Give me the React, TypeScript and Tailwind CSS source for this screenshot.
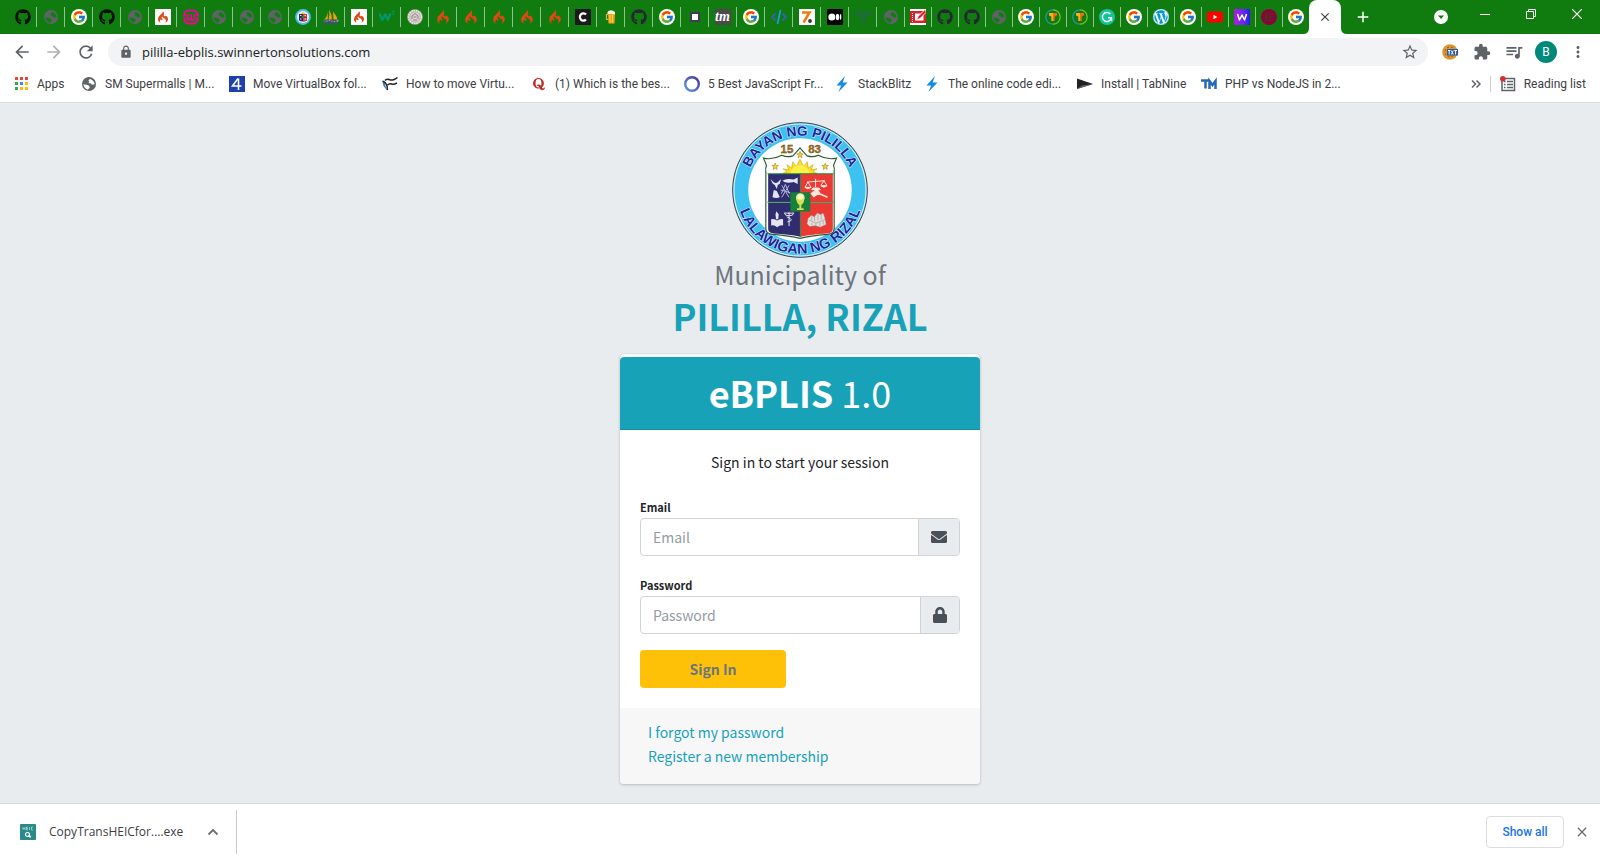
import React from "react";
import { FaGithub, FaWordpress, FaQuora, FaEnvelope, FaLock } from "react-icons/fa";
import { FcGoogle } from "react-icons/fc";
import { SiCodeigniter } from "react-icons/si";
import {
  MdArrowBack,
  MdArrowForward,
  MdRefresh,
  MdLock,
  MdStarBorder,
  MdExtension,
  MdMoreVert,
  MdClose,
  MdAdd,
  MdQueueMusic,
} from "react-icons/md";

const UI = "font-['Roboto','Noto_Sans',sans-serif]";
const PAGE = "font-['Noto_Sans_CJK_JP','Noto_Sans_CJK_SC',sans-serif]";

function Globe({ land = "#fff" }: { land?: string }) {
  return (
    <svg viewBox="0 0 24 24" className="size-4" aria-hidden="true">
      <circle cx="12" cy="12" r="10.5" fill="#5f6368" />
      <path d="M3.500 12.500l5 .5 4 1.500.5 3-3 3C6.500 19.500 4 16.500 3.500 12.500zM13.500 4.500l-2.500 2 1.500 2-1.500 2 4 .8 1.500 2 4-.8C20 8.500 17.500 5.500 13.500 4.500z" fill={land} />
    </svg>
  );
}

function TabGlobe() {
  return <Globe land="#107c10" />;
}

function Google() {
  return (
    <span className="flex size-4 items-center justify-center rounded-full bg-white">
      <FcGoogle className="size-3.5" />
    </span>
  );
}

function FlameTile() {
  return (
    <span className="flex size-4 items-center justify-center bg-white">
      <SiCodeigniter className="size-3 text-[#dd4814]" />
    </span>
  );
}

function Flame() {
  return <SiCodeigniter className="size-3.5 text-[#dd4814]" />;
}

function Wamp() {
  return (
    <svg viewBox="0 0 16 16" className="size-4" aria-hidden="true">
      <rect x="1.500" y="1.500" width="13" height="13" rx="4.500" fill="none" stroke="#f70094" strokeWidth="2.200" />
      <path d="M4.500 5v4.500q0 1.500 1.700 1.500T8 9.500V5v4.500Q8 11 9.700 11t1.800-1.500V5" fill="none" strokeWidth="1.800" stroke="#f70094" />
      <path d="M0 8h3M13 8h3" stroke="#107c10" strokeWidth="1" />
    </svg>
  );
}

function MiniSeal() {
  return (
    <svg viewBox="0 0 16 16" className="size-4" aria-hidden="true">
      <circle cx="8" cy="8" r="7.900" fill="#4fbfe8" />
      <circle cx="8" cy="8" r="6" fill="#e8eef4" />
      <path d="M4 5h8v6q0 1-4 1.500Q4 12 4 11z" fill="#2b2c6c" />
      <path d="M8 8h4V5H8z" fill="#e53b32" />
      <path d="M8 8.500v4q4-.5 4-1.500V8.500z" fill="#e53b32" />
      <path d="M5 5h6L8 3z" fill="#f7c81e" />
      <rect x="7" y="7" width="2" height="2" fill="#2c8a3a" />
      <path d="M5 6.500h1.500M9.500 6.500H11M5 10h1.500M9.500 10H11" stroke="#d9d9e6" />
    </svg>
  );
}

function Sails() {
  return (
    <svg viewBox="0 0 16 16" className="size-4" aria-hidden="true">
      <path d="M4.500 1.500Q5 7 1 10.500h4z" fill="#c9a227" />
      <path d="M6 .5q3 5 3 10H5.500Q7 6 6 .5zM10 2.500q3.500 4 4.500 8H10.500z" fill="#f89c0e" />
      <path d="M0 11h16l-1.500 2H1z" fill="#9b9bb0" />
      <path d="M1 15.500v-4h2v2H1M5 15.500v-4l1.500 2 1.500-2v4M10 15.500v-4h3v4M10 13.500h5" fill="none" stroke="#4b4b78" strokeWidth="1.200" />
    </svg>
  );
}

function W3() {
  return (
    <svg viewBox="0 0 16 16" className="size-4" aria-hidden="true">
      <path d="M.5 4.500l2.700 6.300 3-5.300 2.600 5.300L11.500 4.500" fill="none" stroke="#04966a" strokeWidth="2.400" strokeLinejoin="round" />
      <path d="M13 2h2l-1 1.300q1.500.3 1 1.500t-2 .6" fill="none" stroke="#04966a" strokeWidth="0.900" />
    </svg>
  );
}

function GreySeal() {
  return (
    <svg viewBox="0 0 16 16" className="size-4" aria-hidden="true">
      <circle cx="8" cy="8" r="7.800" fill="#b9b0ab" />
      <circle cx="8" cy="8" r="6.300" fill="none" stroke="#efe9e6" strokeWidth="1.500" strokeDasharray="1.500 .8" />
      <circle cx="8" cy="8" r="4.800" fill="#d9d2ce" />
      <path d="M5 10V7l3-2.500L11 7v3M6.500 8h3M6 11h4" fill="none" stroke="#8d8480" />
    </svg>
  );
}

function LetterC() {
  return (
    <svg viewBox="0 0 16 16" className="size-4" aria-hidden="true">
      <rect width="16" height="16" fill="#1b1b1f" />
      <path d="M11 5.500A3.500 3.700 0 1 0 11 10.500" fill="none" stroke="#fff" strokeWidth="2.200" />
    </svg>
  );
}

function Beer() {
  return (
    <svg viewBox="0 0 16 16" className="size-4" aria-hidden="true">
      <path d="M5 5.500H3.500v5H5.500" fill="none" stroke="#d8b25a" strokeWidth="1.200" />
      <path d="M5 3.500h7L11.500 14.500h-6z" fill="#f2a516" />
      <path d="M7 6v7.500M9.500 6v7.500" stroke="#ffc94d" />
      <path d="M4.500 5V3L6 1.800l2-.5 2 .5L12 3v2.500L10 5z" fill="#f6efdc" />
    </svg>
  );
}

function Square() {
  return (
    <svg viewBox="0 0 16 16" className="size-4" aria-hidden="true">
      <rect x="3" y="3" width="10" height="10" fill="#3f3d56" />
      <rect x="5" y="5" width="6" height="6" fill="#fff" />
    </svg>
  );
}

function Tm() {
  return <span className="flex size-4 items-center justify-center bg-[#4a4a4a] font-['Liberation_Serif',serif] text-sm leading-none font-bold text-white italic">tm</span>;
}

function Code() {
  return (
    <svg viewBox="0 0 16 16" className="size-4" aria-hidden="true">
      <path d="M4.500 4.500L1 8l3.500 3.500M11.500 4.500L15 8l-3.500 3.500" fill="none" stroke="#3d5faf" strokeWidth="1.800" />
      <path d="M9.500 1L6.500 15" stroke="#18a0e8" strokeWidth="1.700" />
    </svg>
  );
}

function Zed() {
  return (
    <svg viewBox="0 0 16 16" className="size-4" aria-hidden="true">
      <rect width="16" height="16" fill="#fff" />
      <path d="M3 3.500h7.500L4.500 13.500" fill="none" stroke="#f07c12" strokeWidth="2.600" />
      <circle cx="11" cy="12" r="1.900" fill="#333" />
    </svg>
  );
}

function Medium() {
  return (
    <svg viewBox="0 0 16 16" className="size-4" aria-hidden="true">
      <rect width="16" height="16" rx="1" fill="#000" />
      <circle cx="4.800" cy="8" r="3.500" fill="#fff" />
      <ellipse cx="10.500" cy="8" rx="1.700" ry="3.300" fill="#fff" />
      <ellipse cx="13.600" cy="8" rx="0.800" ry="3" fill="#fff" />
    </svg>
  );
}

function Figure() {
  return (
    <svg viewBox="0 0 16 16" className="size-4" aria-hidden="true">
      <path d="M1 2.500v4M3 2.500v4M13 2.500v4M15 2.500v4M1 4.500h14M5.500 5l1.500 4-1.500 5.500M10.500 5L9 9l1.500 5.500M7 2.500h2M6 10.500h4" fill="none" stroke="#2a5f5a" strokeWidth="1.200" />
    </svg>
  );
}

function RedPen() {
  return (
    <svg viewBox="0 0 16 16" className="size-4" aria-hidden="true">
      <rect width="16" height="16" fill="#fff" />
      <path d="M0 2h16v12H0z" fill="#d8232f" />
      <path d="M5 4.500h8.500v7H5z" fill="#fff" />
      <path d="M15.500 0L8 7.500 6.500 11 10 9.500 16 3.500z" fill="#d8232f" stroke="#fff" strokeWidth="0.800" />
      <path d="M2.500 4v9" stroke="#fff" strokeDasharray="1 1" />
    </svg>
  );
}

function TeeRing() {
  return (
    <svg viewBox="0 0 16 16" className="size-4" aria-hidden="true">
      <path d="M8 .8A7.200 7.200 0 0 0 8 15.200" fill="none" stroke="#1d9bb5" strokeWidth="1.200" />
      <path d="M8 .8A7.200 7.200 0 0 1 8 15.200" fill="none" stroke="#7ec820" strokeWidth="1.200" />
      <path d="M4 4h4v8H6.300V7.500L4 6.500z" fill="#f7b11b" />
      <path d="M12 4H8v8h1.700V7.500l2.300-1z" fill="#ee6d1a" />
    </svg>
  );
}

function Grammarly() {
  return (
    <svg viewBox="0 0 16 16" className="size-4" aria-hidden="true">
      <circle cx="8" cy="8" r="8" fill="#15c39a" />
      <path d="M11.300 5A4.500 4.500 0 1 0 12.300 9M12.500 12V8.800H9" fill="none" stroke="#fff" strokeWidth="1.400" />
    </svg>
  );
}

function WordPress() {
  return (
    <span className="flex size-4 items-center justify-center rounded-full bg-white">
      <FaWordpress className="size-4 text-[#0097d6]" />
    </span>
  );
}

function YouTube() {
  return (
    <svg viewBox="0 0 16 16" className="size-4" aria-hidden="true">
      <rect y="2.500" width="16" height="11" rx="2.500" fill="#f00" />
      <path d="M6.500 5.800v4.400L10.300 8z" fill="#fff" />
    </svg>
  );
}

function GradientW() {
  return (
    <span className="flex size-4 items-center justify-center bg-linear-to-r from-[#b014e0] to-[#2418f0]">
      <svg viewBox="0 0 16 16" className="size-4" aria-hidden="true">
        <path d="M3.500 5l2 6L8 6l2.500 5 2-6" fill="none" stroke="#fff" strokeWidth="1.500" strokeLinejoin="round" />
      </svg>
    </span>
  );
}

function Elementor() {
  return (
    <svg viewBox="0 0 16 16" className="size-4" aria-hidden="true">
      <circle cx="8" cy="8" r="8" fill="#92003b" />
      <path d="M4 4h2v8H4zM7 4h5v1.500H7zM7 7.200h5v1.500H7zM7 10.500h5V12H7z" fill="#3f3a1c" />
    </svg>
  );
}

function GithubBlack() {
  return <FaGithub className="size-4 text-[#0a0f0a]" />;
}

function GithubDark() {
  return <FaGithub className="size-4 text-[#24292f]" />;
}

type Tab = [string, () => React.ReactElement];

const wideTabs: Tab[] = [
  ["GitHub", GithubBlack], ["Site", TabGlobe], ["Google", Google], ["GitHub", GithubBlack], ["Site", TabGlobe],
  ["CodeIgniter", FlameTile], ["WampServer", Wamp], ["Site", TabGlobe], ["Site", TabGlobe], ["Site", TabGlobe],
  ["Pililla", MiniSeal], ["phpMyAdmin", Sails], ["CodeIgniter", FlameTile], ["W3Schools", W3], ["Municipality", GreySeal],
  ["CodeIgniter", Flame], ["CodeIgniter", Flame], ["CodeIgniter", Flame], ["CodeIgniter", Flame], ["CodeIgniter", Flame],
  ["C", LetterC], ["Beer", Beer], ["GitHub", GithubDark], ["Google", Google], ["Square", Square], ["TM", Tm],
  ["Google", Google], ["Code", Code], ["Z", Zed], ["Medium", Medium], ["Figure", Figure], ["Site", TabGlobe],
];

const slimTabs: Tab[] = [
  ["Editor", RedPen], ["GitHub", GithubDark], ["GitHub", GithubDark], ["Site", TabGlobe], ["Google", Google],
  ["Tuts", TeeRing], ["Tuts", TeeRing], ["Grammarly", Grammarly], ["Google", Google], ["WordPress", WordPress],
  ["Google", Google], ["YouTube", YouTube], ["W", GradientW], ["Elementor", Elementor],
];

function TabButton({ name, icon: Icon, size }: { name: string; icon: () => React.ReactElement; size: string }) {
  return (
    <button aria-label={name} className={"flex h-5 shrink-0 items-center justify-center border-r border-[#8fc38f] " + size}>
      <Icon />
    </button>
  );
}

function TabStrip() {
  return (
    <div className="flex h-[34px] bg-[#107c10] pl-[9px]">
      <div className="flex items-center">
        {wideTabs.map(([name, icon], i) => (
          <TabButton key={i} name={name} icon={icon} size="w-7" />
        ))}
        {slimTabs.map(([name, icon], i) => (
          <TabButton key={i} name={name} icon={icon} size="w-[27px]" />
        ))}
        <button aria-label="Google" className="flex h-5 w-[26px] items-center justify-center">
          <Google />
        </button>
      </div>
      <div className="relative flex w-8 items-center justify-center self-stretch rounded-t-lg bg-white">
        <svg viewBox="0 0 6 6" className="absolute right-full bottom-0 size-1.5" aria-hidden="true"><path d="M6 0v6H0Q6 6 6 0z" fill="#fff" /></svg>
        <svg viewBox="0 0 6 6" className="absolute bottom-0 left-full size-1.5" aria-hidden="true"><path d="M0 0v6h6Q0 6 0 0z" fill="#fff" /></svg>
        <button aria-label="Close tab" className="text-[#3c4043]">
          <MdClose className="size-3.5" />
        </button>
      </div>
      <button aria-label="New tab" className="flex w-11 items-center justify-center text-white">
        <MdAdd className="size-[18px]" />
      </button>
      <div className="ml-auto flex">
        <button aria-label="Search tabs" className="flex w-[42px] items-center justify-center">
          <svg viewBox="0 0 14 14" className="size-3.5" aria-hidden="true">
            <circle cx="7" cy="7" r="7" fill="#fff" />
            <path d="M4 5.500h6L7 9z" fill="#107c10" />
          </svg>
        </button>
        <button aria-label="Minimize" className="flex h-7 w-[46px] items-center justify-center">
          <svg viewBox="0 0 10 10" className="size-2.5" aria-hidden="true"><path d="M0 5.500h10" stroke="#fff" /></svg>
        </button>
        <button aria-label="Restore" className="flex h-7 w-[46px] items-center justify-center">
          <svg viewBox="0 0 10 10" className="size-2.5" aria-hidden="true"><path d="M.5 2.500h7v7h-7zM2.500 2.500v-2h7v7h-2" fill="none" stroke="#fff" /></svg>
        </button>
        <button aria-label="Close window" className="flex h-7 w-[46px] items-center justify-center">
          <svg viewBox="0 0 10 10" className="size-2.5" aria-hidden="true"><path d="M0 0l10 10M10 0L0 10" stroke="#fff" strokeWidth="1.200" /></svg>
        </button>
      </div>
    </div>
  );
}

const toolButton = "flex w-8 shrink-0 items-center justify-center text-[#5f6368]";

function TxtBadge() {
  return (
    <svg viewBox="0 0 16 16" className="size-4" aria-hidden="true">
      <circle cx="8" cy="8" r="7.800" fill="#e0962e" />
      <circle cx="8" cy="8" r="5" fill="none" stroke="#8a5a17" strokeDasharray="2 2" />
      <rect x="5" y="5" width="11" height="6.500" fill="#2458a8" />
      <path d="M6 6.500h2.400M7.200 6.500v4M9.300 6.500l2 4M11.300 6.500l-2 4M12.300 6.500h2.700M13.600 6.500v4" stroke="#fff" strokeWidth="1" />
    </svg>
  );
}

function Toolbar() {
  return (
    <div className="flex h-9 items-center px-[6px]">
      <button aria-label="Back" className={toolButton}><MdArrowBack className="size-5" /></button>
      <button aria-label="Forward" className={toolButton + " opacity-50"}><MdArrowForward className="size-5" /></button>
      <button aria-label="Reload" className={toolButton}><MdRefresh className="size-5" /></button>
      <div className="ml-[6px] flex h-7 flex-1 items-center rounded-full bg-[#f1f3f4] pr-[9px]">
        <MdLock className="mr-[9px] ml-[11px] size-3.5 text-[#5f6368]" />
        <input
          aria-label="Address"
          defaultValue="pililla-ebplis.swinnertonsolutions.com"
          className="min-w-0 flex-1 bg-transparent font-['Open_Sans','Noto_Sans',sans-serif] text-[13px] leading-5 text-[#202124] outline-none"
        />
        <button aria-label="Bookmark this page" className="text-[#5f6368]"><MdStarBorder className="size-[18px]" /></button>
      </div>
      <div className="ml-[6px] flex">
        <button aria-label="Text extension" className={toolButton}><TxtBadge /></button>
        <button aria-label="Extensions" className={toolButton}><MdExtension className="size-[18px]" /></button>
        <button aria-label="Media controls" className={toolButton}><MdQueueMusic className="size-5" /></button>
        <button aria-label="Profile" className={toolButton}>
          <span className="flex size-[22px] items-center justify-center rounded-full bg-[#00897b] text-xs text-white">B</span>
        </button>
        <button aria-label="Menu" className={toolButton}><MdMoreVert className="size-[18px]" /></button>
      </div>
    </div>
  );
}

function AppsGrid() {
  return (
    <svg viewBox="0 0 14 14" className="size-3.5" aria-hidden="true">
      <path d="M0 0h3v3H0zM5 0h3v3H5zM10 0h3v3h-3z" fill="#ea4335" />
      <path d="M0 5h3v3H0z" fill="#34a853" />
      <path d="M5 5h3v3H5z" fill="#4285f4" />
      <path d="M10 5h3v3h-3zM5 10h3v3H5zM10 10h3v3h-3z" fill="#fbbc04" />
      <path d="M0 10h3v3H0z" fill="#34a853" />
    </svg>
  );
}

function Four() {
  return (
    <svg viewBox="0 0 16 16" className="size-4" aria-hidden="true">
      <rect width="16" height="16" fill="#1e3fae" />
      <path d="M9 2.500L3.500 10h9M9.500 2.500v11.500" fill="none" stroke="#fff" strokeWidth="1.600" />
    </svg>
  );
}

function Waves() {
  return (
    <svg viewBox="0 0 16 16" className="size-4" aria-hidden="true">
      <path d="M0 4.500l3 1.500L3 9l2.500 6L1.500 10z" fill="#3182b8" />
      <path d="M3 4.500q1.500-2 4-1t4.500.3T15.500 1.500M5.500 9q2-2 4-1t5.500-1M1 5l2.500 2 1.500 3 .5 4" fill="none" stroke="#222" strokeWidth="1.500" />
    </svg>
  );
}

function Quora() {
  return (
    <span className="flex size-4 items-center justify-center">
      <FaQuora className="size-3.5 text-[#b92b27]" />
    </span>
  );
}

function Ring() {
  return (
    <svg viewBox="0 0 16 16" className="size-4" aria-hidden="true">
      <defs><linearGradient id="ring" x1="1" y1="0" x2="0" y2="1"><stop stopColor="#4b2fa0" /><stop offset="1" stopColor="#5c9be0" /></linearGradient></defs>
      <circle cx="8" cy="8" r="6.800" fill="none" stroke="url(#ring)" strokeWidth="2.400" />
    </svg>
  );
}

function Bolt() {
  return <svg viewBox="0 0 16 16" className="size-4" aria-hidden="true"><path d="M11 0L2.500 9.500h4.700L4.500 16 13.500 6.500H8.600z" fill="#1389e8" /></svg>;
}

function Play() {
  return (
    <svg viewBox="0 0 16 16" className="size-4" aria-hidden="true">
      <path d="M0 2.500L16 8 0 13z" fill="#222" />
      <path d="M0 13l5-3.500L16 8z" fill="#666" />
    </svg>
  );
}

function TmBlue() {
  return <svg viewBox="0 0 16 16" className="size-4" aria-hidden="true"><path d="M0 4.500h7.500M4.500 4.500v8M8.500 13V5l3 4 3-4v8" fill="none" stroke="#2468b8" strokeWidth="2.500" /></svg>;
}

const bookmarks: [string, () => React.ReactElement, string][] = [
  ["Apps", AppsGrid, "w-[66px]"],
  ["SM Supermalls | M...", Globe, "w-[148px]"],
  ["Move VirtualBox fol...", Four, "w-[153px]"],
  ["How to move Virtu...", Waves, "w-[149px]"],
  ["(1) Which is the bes...", Quora, "w-[153px]"],
  ["5 Best JavaScript Fr...", Ring, "w-[150px]"],
  ["StackBlitz", Bolt, "w-[90px]"],
  ["The online code edi...", Bolt, "w-[153px]"],
  ["Install | TabNine", Play, "w-[124px]"],
  ["PHP vs NodeJS in 2...", TmBlue, "w-[150px]"],
];

function BookmarkBar() {
  return (
    <nav aria-label="Bookmarks" className="flex h-[33px] items-center border-b border-[#dadce0] pr-[14px] pb-1 pl-[15px] text-xs whitespace-nowrap text-[#3c4043]">
      {bookmarks.map(([label, Icon, size]) => (
        <a key={label} href="#" className={"flex shrink-0 items-center gap-2 " + size}>
          <span className="shrink-0"><Icon /></span>
          {label}
        </a>
      ))}
      <button aria-label="More bookmarks" className="ml-auto">
        <svg viewBox="0 0 10 10" className="size-2.5" aria-hidden="true"><path d="M1 1.500L4.500 5 1 8.500M5.500 1.500L9 5 5.500 8.500" fill="none" stroke="#5f6368" strokeWidth="1.500" /></svg>
      </button>
      <span className="mx-[9px] h-4 w-px bg-[#c8cbd0]" />
      <button className="flex items-center gap-2">
        <svg viewBox="0 0 16 16" className="size-4" aria-hidden="true">
          <path d="M2 2.500h12.500v12H2z" fill="none" stroke="#5f6368" strokeWidth="1.500" />
          <path d="M4 5.500h1.500M4 8.500h1.500M4 11.500h1.500M7 5.500h6M7 8.500h6M7 11.500h6" stroke="#5f6368" strokeWidth="1.300" />
          <circle cx="2.800" cy="2.800" r="2.800" fill="#d93025" />
        </svg>
        Reading list
      </button>
    </nav>
  );
}

function Star({ x, y }: { x: number; y: number }) {
  return <path transform={`translate(${x} ${y})`} d="M0-10L2.500-3H10L4 1.500 6 9 0 4.500-6 9-4 1.500-10-3h7.500z" fill="#ffdc1e" stroke="#8a6a10" strokeWidth="1.500" />;
}

function Seal() {
  return (
    <svg viewBox="36 35 410 410" className="size-[136px]" role="img" aria-label="Seal of Pililla, Rizal">
      <circle cx="241" cy="240" r="203" fill="#3dc1f0" stroke="#4a4040" strokeWidth="3" />
      <circle cx="241" cy="240" r="199" fill="none" stroke="#e9f4f8" strokeWidth="3" />
      <circle cx="241" cy="240" r="156" fill="#fff" />
      <defs>
        <path id="upper" d="M77 240a164 164 0 0 1 328 0" />
        <path id="lower" d="M49 240a192 192 0 0 0 384 0" />
      </defs>
      <g className="font-['Liberation_Sans',Arial,sans-serif] font-bold" fill="#20249c" stroke="#e4f5fc" strokeWidth="3" paintOrder="stroke" textAnchor="middle">
        <text fontSize="41"><textPath href="#upper" startOffset="50%">BAYAN NG PILILLA</textPath></text>
        <text fontSize="43"><textPath href="#lower" startOffset="50%">LALAWIGAN NG RIZAL</textPath></text>
      </g>
      <path d="M131 144q28 6 55-9 16 8 34 2l21-24 21 24q18 6 34-2 27 15 55 9l-9 22q4 8 2 20v170q0 16-20 18-53 4-83 12-30-8-83-12-20-2-20-18V186q-2-12 2-20z" fill="#fff" stroke="#285c30" strokeWidth="3.500" />
      <g className="font-['Liberation_Sans',Arial,sans-serif] font-bold" fill="#a9731c" stroke="#5e3d0c" strokeWidth="1" fontSize="35" textAnchor="middle">
        <text x="202" y="127">15</text>
        <text x="285" y="127">83</text>
      </g>
      <path d="M188 191q4-4 14-5l-12-10 17 3-6-16 15 11 3-19 11 14 11-22 11 22 11-14 3 19 15-11-6 16 17-3-12 10q10 1 14 5z" fill="#ffdc1e" stroke="#b9940f" strokeWidth="1.500" />
      <path d="M213 191a28 26 0 0 1 56 0z" fill="#fff04a" />
      <Star x={241} y={134} />
      <Star x={166} y={169} />
      <Star x={317} y={169} />
      <path d="M145 192h97v84h-97z" fill="#2f2d70" />
      <path d="M243 192h97v84h-97z" fill="#ea3a33" />
      <path d="M145 279h97v102q-35-8-80-10-17-1-17-14z" fill="#2f2d70" />
      <path d="M243 279h97v78q0 13-17 14-45 2-80 10z" fill="#ea3a33" />
      <path d="M242 190v192M143 277h199M143 191h199" stroke="#1c8a3c" strokeWidth="3" />
      <rect x="212" y="247" width="60" height="58" fill="#17803a" />
      <g fill="#e4e4ef">
        <path d="M152 207l10 10q6 4 12 0l10-10-4 14-6 4-3 12-6-12-6-4zM188 212q10-8 34-4l12-6v20l-12-6q-24 6-34-4zM162 240l9 3 9 18q-8 6-22 1z" />
        <path d="M154 328q10-3 18 4 8-7 18-4v19q-10-2-18 5-8-7-18-5zM170 304l7 10-2 14h-6l-2-14z" />
        <path d="M208 306v43M194 309q14 3 28 0l-4 7q-10 3-20 0zM201 321q14 5 14 9t-12 6" fill="none" stroke="#e4e4ef" strokeWidth="3" />
        <path d="M186 226l22 36M208 226l-22 36M183 240l28 8M197 223l-12 28M197 223l12 28" fill="none" stroke="#b6b7d8" strokeWidth="3" />
      </g>
      <g fill="none" stroke="#ffe6e0" strokeWidth="3">
        <path d="M262 216l54-4M288 206v26M265 216l-9 16M265 216l9 16M313 212l-9 14M313 212l9 14" />
        <path d="M256 232h18q-9 9-18 0zM304 227h18q-9 9-18 0zM280 234h18l4 5h-26z" fill="#ffe6e0" />
        <path d="M276 250l16-11 7 9-16 11zM294 249l30 13" fill="#ffe6e0" strokeWidth="5" />
      </g>
      <g fill="#e7dedb" stroke="#86807e" strokeWidth="1.500">
        <path d="M265 326l10-10 9 5 9-12 10 5 8-5 5 15 4 20-18 8-15-4-17 2-8-8z" />
        <path d="M269 330l20 10 29-12M289 340v12M276 320v10M285 318v16M295 314v18M305 314v15M277 338v8M301 337v12M311 333v11" fill="none" />
      </g>
      <circle cx="242" cy="263" r="13" fill="#eff39a" />
      <path d="M230 266h24q-1 16-9 19v10h7v5h-20v-5h7v-10q-8-3-9-19z" fill="#d8dd52" />
      <circle cx="242" cy="261" r="8" fill="#fcfcd8" />
    </svg>
  );
}

function Field({ id, label, type, icon }: { id: string; label: string; type: string; icon: React.ReactElement }) {
  return (
    <div>
      <label htmlFor={id} className="block h-5 text-[11px] leading-[18px] font-bold">{label}</label>
      <div className="flex h-[38px] overflow-hidden rounded border border-[#ced4da]">
        <input id={id} type={type} placeholder={label} className="min-w-0 flex-1 px-3 text-sm outline-none placeholder:text-[#939ba2]" />
        <span className="flex items-center border-l border-[#ced4da] bg-[#e9ecef] px-3 text-[#495057]">{icon}</span>
      </div>
    </div>
  );
}

function LoginCard() {
  return (
    <div className="mt-[15px] w-[360px] max-w-full overflow-hidden rounded border-t-[3px] border-[#f8f9fa] bg-white shadow-[0_0_1px_rgba(0,0,0,0.13),0_1px_3px_rgba(0,0,0,0.2)]">
      <div className="flex h-[73px] items-center justify-center rounded-t border-b border-[#148ea1] bg-[#17a2b8] pb-0.5 text-4xl text-white">
        <h2><b>eBPLIS</b> 1.0</h2>
      </div>
      <form className="p-5" onSubmit={(e) => e.preventDefault()}>
        <p className="mb-6 text-center text-sm leading-6">Sign in to start your session</p>
        <div className="flex flex-col gap-5">
          <Field id="email" label="Email" type="email" icon={<FaEnvelope className="size-4" />} />
          <Field id="password" label="Password" type="password" icon={<FaLock className="h-4 w-3.5" />} />
        </div>
        <button type="submit" className="mt-4 block h-[38px] w-[146px] rounded bg-[#ffc107] text-sm font-bold text-[#6c757d]">Sign In</button>
      </form>
      <div className="flex flex-col items-start bg-[#f7f7f7] px-7 pt-3 pb-4 text-sm leading-6 text-[#17a2b8]">
        <a href="#">I forgot my password</a>
        <a href="#">Register a new membership</a>
      </div>
    </div>
  );
}

function DownloadBar() {
  return (
    <footer className={"flex h-[57px] items-center border-t border-[#d5d7da] bg-white pr-[10px] pl-5 text-[#3c4043] " + UI}>
      <div className="flex h-11 items-center border-r border-[#c8c8c8] pr-[17px]">
        <svg viewBox="0 0 16 16" className="size-4" aria-hidden="true">
          <rect width="16" height="16" rx="1" fill="#2a8a8a" />
          <path d="M3 3v3M5 3v3M3 4.500h2M6.500 3v3M6.500 3H8M6.500 4.500H8M6.500 6H8M9.500 3v3M13 3h-1.500v3H13" fill="none" stroke="#a9d4d2" strokeWidth="0.800" />
          <circle cx="7.500" cy="10.500" r="2" fill="none" stroke="#fff" strokeWidth="1.200" />
          <path d="M9 11l1.500 2.500" stroke="#fff" strokeWidth="1.500" />
        </svg>
        <span className="ml-[13px] w-[148px] font-['Open_Sans','Noto_Sans',sans-serif] text-xs whitespace-nowrap">CopyTransHEICfor....exe</span>
        <button aria-label="Download options" className="ml-[10px]">
          <svg viewBox="0 0 12 8" className="h-2 w-3" aria-hidden="true"><path d="M1.500 6.500L6 2l4.500 4.500" fill="none" stroke="#6b6f73" strokeWidth="1.800" /></svg>
        </button>
      </div>
      <button className="ml-auto h-8 w-[78px] rounded border border-[#dadce0] text-xs font-medium text-[#1a73e8]">Show all</button>
      <button aria-label="Close downloads" className="ml-[10px] text-[#6b6f73]"><MdClose className="size-4" /></button>
    </footer>
  );
}

export default function App() {
  return (
    <div className="flex min-h-screen flex-col">
      <header className={"bg-white " + UI}>
        <TabStrip />
        <Toolbar />
        <BookmarkBar />
      </header>
      <main className={"flex flex-1 flex-col items-center bg-[#e9ecef] px-4 pt-[19px] pb-[19px] text-[#212529] " + PAGE}>
        <Seal />
        <h1 className="text-center">
          <span className="block text-[25px] leading-[33px] text-[#6c757d]">Municipality of</span>
          <span className="block text-4xl leading-[48px] font-bold text-[#17a2b8]">PILILLA, RIZAL</span>
        </h1>
        <LoginCard />
      </main>
      <DownloadBar />
    </div>
  );
}
